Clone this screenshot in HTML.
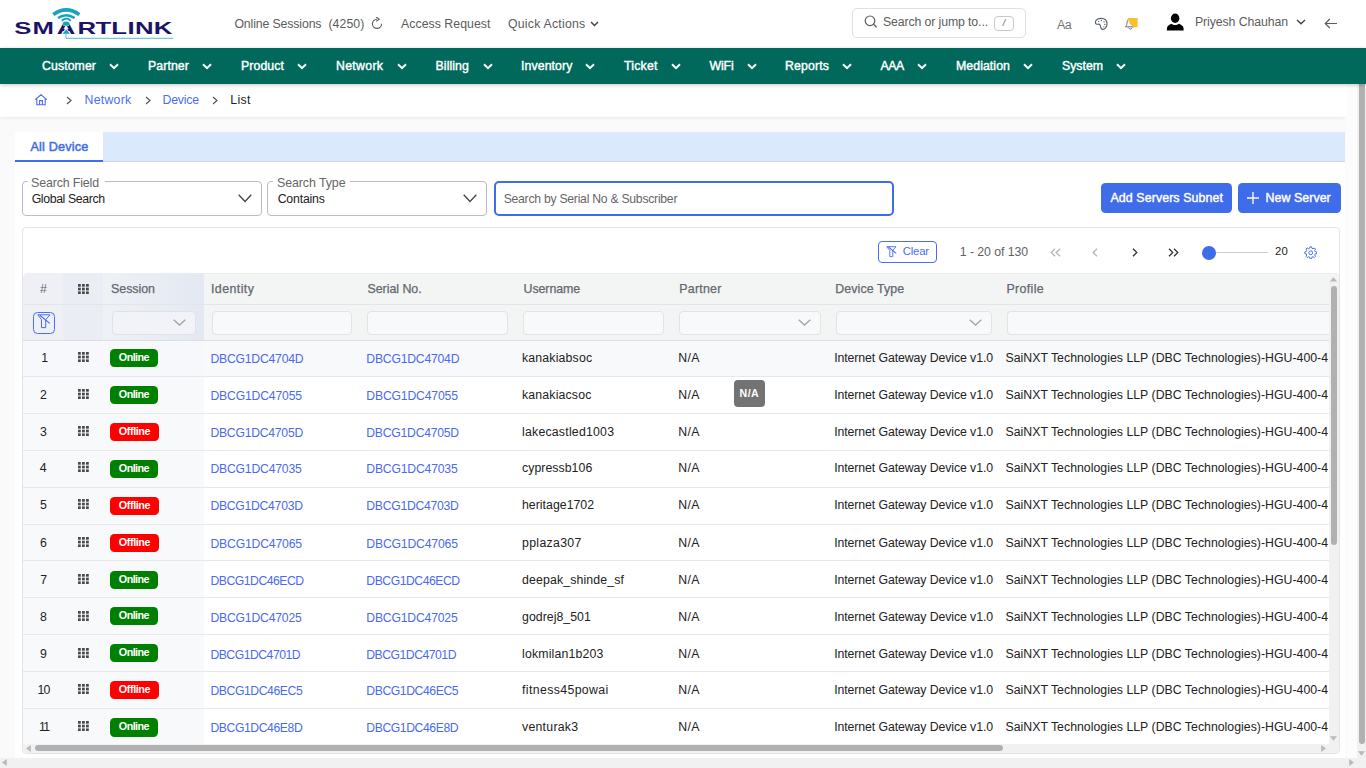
<!DOCTYPE html>
<html lang="en">
<head>
<meta charset="utf-8">
<title>Device List</title>
<style>
*{box-sizing:border-box;margin:0;padding:0}
html,body{width:1366px;height:768px;overflow:hidden;background:#fafafa;font-family:"Liberation Sans",sans-serif;font-size:13px;color:#222}
.abs,.t,svg{position:absolute}
.t{white-space:pre}
#top{position:absolute;left:0;top:0;width:1366px;height:48px;background:#fff}
#nav{position:absolute;left:0;top:48px;width:1366px;height:36px;background:#00695c;box-shadow:0 1px 4px rgba(0,0,0,.22);z-index:5}
#nav .t{-webkit-text-stroke:.4px #fff}
#crumb{position:absolute;left:0;top:84px;width:1346px;height:33px;background:#fff;box-shadow:0 0 4px rgba(0,0,0,.12)}
#tabs{position:absolute;left:15px;top:132.3px;width:1330px;height:30px;background:#dbe9fd;border-bottom:1px solid #cfd9e8}
#tab1{position:absolute;left:.3px;top:0;width:88px;height:30px;background:#fff;border-bottom:2px solid #3f6fe8}
#panel{position:absolute;left:15px;top:162px;width:1330px;height:606px;background:#fff}
.fs{position:absolute;top:181.2px;height:34.6px;border:1px solid #b9bcc8;border-radius:4px;background:#fff}
.btn{position:absolute;top:183px;height:29.7px;background:#3f6fe8;border-radius:4.5px}
.btn .t{-webkit-text-stroke:.4px #fff}
#card{position:absolute;left:22px;top:227px;width:1318px;height:527px;border:1px solid #e4e4e4;border-radius:4px;background:#fff;overflow:hidden}
</style>
</head>
<body>
<div id="top">
<svg style="left:12px;top:6px" width="164" height="36" viewBox="0 0 164 36">
<text transform="scale(1.63,1)" x="1.31 12.61 27.53 40.21 51.21 60.82 70.89 75.42 86.97" y="28" font-family="Liberation Sans, sans-serif" font-weight="700" font-size="15.8" fill="#1b1464">SMARTLINK</text>
<path d="M54.15 21.4 L58.7 28.3 L49.6 28.3 Z" fill="#fff"/>
<g fill="none" stroke="#17a2bd">
<path d="M41.3 8.6 Q54.3 -0.8 67.3 8.6" stroke-width="3.6"/>
<path d="M46 12.1 Q54.3 6.3 62.6 12.1" stroke-width="2.5"/>
<path d="M49.8 14.8 Q54.3 10.2 58.8 14.8" stroke-width="2"/>
</g>
<ellipse cx="54.1" cy="17.8" rx="3.5" ry="2.5" fill="#fff"/>
<ellipse cx="54.1" cy="17.7" rx="3.3" ry="2.1" fill="#17a2bd"/>
<path d="M54.2 23.3 L58 27.7 L50.6 27.7 Z" fill="#17a2bd"/>
<path d="M54 27.5 L54 32.3 L161 32.3" fill="none" stroke="#3fb2cc" stroke-width=".9"/>
</svg>
<div class="t" style="left:234.4px;top:16px;height:16px;line-height:16px;font-size:12.3px;color:#5c5c5c;letter-spacing:-0.124px;">Online Sessions</div>
<div class="t" style="left:328.4px;top:16px;height:16px;line-height:16px;font-size:12.3px;color:#5c5c5c;letter-spacing:0.076px;">(4250)</div>
<svg style="left:371px;top:17px" width="12" height="13" viewBox="0 0 12 13"><path d="M6 2.2 A4.6 4.6 0 1 0 10.6 6.8" fill="none" stroke="#5c5c5c" stroke-width="1.1"/><path d="M5.2 0 L8.2 2.2 L5.2 4.4" fill="none" stroke="#5c5c5c" stroke-width="1.1"/></svg>
<div class="t" style="left:401px;top:16px;height:16px;line-height:16px;font-size:12.3px;color:#5c5c5c;letter-spacing:0.046px;">Access Request</div>
<div class="t" style="left:508px;top:16px;height:16px;line-height:16px;font-size:12.3px;color:#5c5c5c;letter-spacing:0.231px;">Quick Actions</div>
<svg style="left:590px;top:21px" width="9" height="6" viewBox="0 0 9 6"><path d="M1 1 L4.5 4.5 L8 1" fill="none" stroke="#444" stroke-width="1.5"/></svg>
<div class="abs" style="left:852px;top:8px;width:174px;height:30px;border:1px solid #dde2e8;border-radius:5px"></div>
<svg style="left:864px;top:15px" width="14" height="13" viewBox="0 0 14 13"><circle cx="6" cy="5.8" r="4.8" fill="none" stroke="#5c5c5c" stroke-width="1.2"/><path d="M9.5 9.3 L12.6 12.2" stroke="#5c5c5c" stroke-width="1.3"/></svg>
<div class="t" style="left:883px;top:14px;height:16px;line-height:16px;font-size:12.3px;color:#5c5c5c;letter-spacing:-0.116px;">Search or jump to...</div>
<div class="abs" style="left:994px;top:16px;width:20px;height:15px;border:1px solid #c8c8c8;border-radius:4px;font-size:9px;line-height:13px;text-align:center;color:#555;font-style:italic">/</div>
<div class="t" style="left:1057px;top:17px;height:16px;line-height:16px;font-size:12.5px;color:#777;letter-spacing:-0.648px;">Aa</div>
<svg style="left:1094px;top:17px" width="15" height="14" viewBox="0 0 15 14"><path d="M7.2 1.3 C3.9 1.3 1.4 3.2 1.4 5.6 C1.4 7 2.6 7.4 3.9 7.2 C5.3 7 6.2 7.6 6.4 8.9 C6.7 10.8 7.3 12.5 8.6 12.4 C11 12.2 13.1 9.6 13.1 6.6 C13.1 3.4 10.6 1.3 7.2 1.3 Z" fill="none" stroke="#58616b" stroke-width="1.15"/><circle cx="4.6" cy="4.3" r=".65" fill="#58616b"/><circle cx="7.4" cy="3.5" r=".65" fill="#58616b"/><circle cx="10" cy="4.8" r=".65" fill="#58616b"/><circle cx="10.8" cy="7.4" r=".65" fill="#58616b"/><circle cx="9.8" cy="9.8" r=".65" fill="#58616b"/></svg>
<svg style="left:1124px;top:17px" width="15" height="14" viewBox="0 0 15 14"><path d="M1.6 9.8 C3 8.6 2.9 6.6 3.2 4.6 C3.5 2.8 4.6 1.6 6.2 1.4 M1.4 9.8 L10 9.8" fill="none" stroke="#6b7480" stroke-width="1"/><path d="M4.6 10.6 C5.2 12.6 7.6 12.6 8.2 10.6" fill="none" stroke="#6b7480" stroke-width="1"/><path d="M3.9 1.1 L13.7 1.1 L13.7 10.3 L10.4 10.3 Q4.6 8.2 3.9 1.1 Z" fill="#fbc02d"/></svg>
<svg style="left:1166px;top:13px" width="18" height="18" viewBox="0 0 18 18"><ellipse cx="9.15" cy="5.2" rx="4.25" ry="4.7" fill="#000"/><path d="M0.9 17.5 L0.9 15.6 C0.9 13 3.4 11.6 5.4 10.8 C7.4 12.4 10.9 12.4 12.9 10.8 C14.9 11.6 17.6 13 17.6 15.6 L17.6 17.5 Z" fill="#000"/></svg>
<div class="t" style="left:1195px;top:14px;height:16px;line-height:16px;font-size:12.3px;color:#5c5c5c;letter-spacing:-0.09px;">Priyesh Chauhan</div>
<svg style="left:1296px;top:19px" width="10" height="6" viewBox="0 0 10 6"><path d="M1 1 L5 4.8 L9 1" fill="none" stroke="#444" stroke-width="1.4"/></svg>
<svg style="left:1324px;top:18px" width="14" height="11" viewBox="0 0 14 11"><path d="M13 5.5 L1.2 5.5 M5.8 1 L1.2 5.5 L5.8 10" fill="none" stroke="#5c5c5c" stroke-width="1.2"/></svg>
</div>
<div id="nav">
<div class="t" style="left:42px;top:10px;height:16px;line-height:16px;font-size:12.3px;color:#fff;letter-spacing:0.086px;">Customer</div>
<svg style="left:109px;top:14.5px" width="10" height="7" viewBox="0 0 10 7"><path d="M1 1.2 L5 5.2 L9 1.2" fill="none" stroke="#fff" stroke-width="2"/></svg>
<div class="t" style="left:148px;top:10px;height:16px;line-height:16px;font-size:12.3px;color:#fff;letter-spacing:0.096px;">Partner</div>
<svg style="left:202px;top:14.5px" width="10" height="7" viewBox="0 0 10 7"><path d="M1 1.2 L5 5.2 L9 1.2" fill="none" stroke="#fff" stroke-width="2"/></svg>
<div class="t" style="left:241px;top:10px;height:16px;line-height:16px;font-size:12.3px;color:#fff;letter-spacing:0.087px;">Product</div>
<svg style="left:297px;top:14.5px" width="10" height="7" viewBox="0 0 10 7"><path d="M1 1.2 L5 5.2 L9 1.2" fill="none" stroke="#fff" stroke-width="2"/></svg>
<div class="t" style="left:336px;top:10px;height:16px;line-height:16px;font-size:12.3px;color:#fff;letter-spacing:0.313px;">Network</div>
<svg style="left:396.5px;top:14.5px" width="10" height="7" viewBox="0 0 10 7"><path d="M1 1.2 L5 5.2 L9 1.2" fill="none" stroke="#fff" stroke-width="2"/></svg>
<div class="t" style="left:435.5px;top:10px;height:16px;line-height:16px;font-size:12.3px;color:#fff;letter-spacing:0.098px;">Billing</div>
<svg style="left:482.5px;top:14.5px" width="10" height="7" viewBox="0 0 10 7"><path d="M1 1.2 L5 5.2 L9 1.2" fill="none" stroke="#fff" stroke-width="2"/></svg>
<div class="t" style="left:521px;top:10px;height:16px;line-height:16px;font-size:12.3px;color:#fff;letter-spacing:0.101px;">Inventory</div>
<svg style="left:585px;top:14.5px" width="10" height="7" viewBox="0 0 10 7"><path d="M1 1.2 L5 5.2 L9 1.2" fill="none" stroke="#fff" stroke-width="2"/></svg>
<div class="t" style="left:624px;top:10px;height:16px;line-height:16px;font-size:12.3px;color:#fff;letter-spacing:0.226px;">Ticket</div>
<svg style="left:671px;top:14.5px" width="10" height="7" viewBox="0 0 10 7"><path d="M1 1.2 L5 5.2 L9 1.2" fill="none" stroke="#fff" stroke-width="2"/></svg>
<div class="t" style="left:709.6px;top:10px;height:16px;line-height:16px;font-size:12.3px;color:#fff;letter-spacing:-0.173px;">WiFi</div>
<svg style="left:747px;top:14.5px" width="10" height="7" viewBox="0 0 10 7"><path d="M1 1.2 L5 5.2 L9 1.2" fill="none" stroke="#fff" stroke-width="2"/></svg>
<div class="t" style="left:785px;top:10px;height:16px;line-height:16px;font-size:12.3px;color:#fff;letter-spacing:0.134px;">Reports</div>
<svg style="left:841.5px;top:14.5px" width="10" height="7" viewBox="0 0 10 7"><path d="M1 1.2 L5 5.2 L9 1.2" fill="none" stroke="#fff" stroke-width="2"/></svg>
<div class="t" style="left:880.4px;top:10px;height:16px;line-height:16px;font-size:12.3px;color:#fff;letter-spacing:-0.336px;">AAA</div>
<svg style="left:917px;top:14.5px" width="10" height="7" viewBox="0 0 10 7"><path d="M1 1.2 L5 5.2 L9 1.2" fill="none" stroke="#fff" stroke-width="2"/></svg>
<div class="t" style="left:956px;top:10px;height:16px;line-height:16px;font-size:12.3px;color:#fff;letter-spacing:0.075px;">Mediation</div>
<svg style="left:1023px;top:14.5px" width="10" height="7" viewBox="0 0 10 7"><path d="M1 1.2 L5 5.2 L9 1.2" fill="none" stroke="#fff" stroke-width="2"/></svg>
<div class="t" style="left:1062px;top:10px;height:16px;line-height:16px;font-size:12.3px;color:#fff;letter-spacing:0.0px;">System</div>
<svg style="left:1116px;top:14.5px" width="10" height="7" viewBox="0 0 10 7"><path d="M1 1.2 L5 5.2 L9 1.2" fill="none" stroke="#fff" stroke-width="2"/></svg>
</div>
<div id="crumb">
<svg style="left:34px;top:10px" width="14" height="12" viewBox="0 0 14 12"><path d="M1 5.6 L7 0.8 L13 5.6 M2.8 4.6 L2.8 10.8 L11.2 10.8 L11.2 4.6 M5.6 10.8 L5.6 6.6 L8.4 6.6 L8.4 10.8" fill="none" stroke="#4a6cf7" stroke-width="1.1"/></svg>
<svg style="left:66.2px;top:12px" width="6" height="9" viewBox="0 0 6 9"><path d="M1 1 L5 4.5 L1 8" fill="none" stroke="#555" stroke-width="1.2"/></svg>
<div class="t" style="left:84.5px;top:8px;height:16px;line-height:16px;font-size:12.3px;color:#4a6cf7;letter-spacing:0.27px;">Network</div>
<svg style="left:144.5px;top:12px" width="6" height="9" viewBox="0 0 6 9"><path d="M1 1 L5 4.5 L1 8" fill="none" stroke="#555" stroke-width="1.2"/></svg>
<div class="t" style="left:162.5px;top:8px;height:16px;line-height:16px;font-size:12.3px;color:#4a6cf7;letter-spacing:-0.182px;">Device</div>
<svg style="left:212.3px;top:12px" width="6" height="9" viewBox="0 0 6 9"><path d="M1 1 L5 4.5 L1 8" fill="none" stroke="#555" stroke-width="1.2"/></svg>
<div class="t" style="left:230.3px;top:8px;height:16px;line-height:16px;font-size:12.3px;color:#222;letter-spacing:0.315px;">List</div>
</div>
<div id="tabs"><div id="tab1"></div>
<div class="t" style="left:15.5px;top:7px;height:16px;line-height:16px;font-size:12.6px;color:#3f6ce9;letter-spacing:0.2px;-webkit-text-stroke:.5px #3f6ce9;">All Device</div>
</div>
<div id="panel"></div>
<div class="fs" style="left:22px;width:240px"><div class="abs" style="left:5px;top:-3px;width:77px;height:5px;background:#fff"></div></div>
<div class="t" style="left:31px;top:174.5px;height:16px;line-height:16px;font-size:12.4px;color:#666;letter-spacing:-0.13px;">Search Field</div>
<div class="t" style="left:31.7px;top:191px;height:16px;line-height:16px;font-size:12.3px;color:#222;letter-spacing:-0.38px;">Global Search</div>
<svg style="left:237.5px;top:194px" width="14" height="8.5" viewBox="0 0 14 8.5"><path d="M.7 .7 L7.0 7.5 L13.3 .7" fill="none" stroke="#444" stroke-width="1.3"/></svg>
<div class="fs" style="left:267px;width:220px"><div class="abs" style="left:5px;top:-3px;width:77px;height:5px;background:#fff"></div></div>
<div class="t" style="left:277px;top:174.5px;height:16px;line-height:16px;font-size:12.4px;color:#666;letter-spacing:-0.077px;">Search Type</div>
<div class="t" style="left:277.7px;top:191px;height:16px;line-height:16px;font-size:12.3px;color:#222;letter-spacing:-0.193px;">Contains</div>
<svg style="left:463.2px;top:194px" width="14" height="8.5" viewBox="0 0 14 8.5"><path d="M.7 .7 L7.0 7.5 L13.3 .7" fill="none" stroke="#444" stroke-width="1.3"/></svg>
<div class="abs" style="left:494px;top:181px;width:400px;height:34.5px;border:2px solid #3f6ce9;border-radius:5px;background:#fff"></div>
<div class="t" style="left:503.7px;top:191px;height:16px;line-height:16px;font-size:12.2px;color:#666;letter-spacing:-0.251px;">Search by Serial No &amp; Subscriber</div>
<div class="btn" style="left:1101px;width:131px;background:#3f6ce9"><div class="t" style="left:9.5px;top:7px;height:16px;line-height:16px;font-size:12.4px;color:#fff;letter-spacing:0.089px;">Add Servers Subnet</div></div>
<div class="btn" style="left:1238px;width:102.5px;background:#3f6ce9"><svg style="left:9px;top:9px" width="12" height="12" viewBox="0 0 12 12"><path d="M6 0 L6 12 M0 6 L12 6" stroke="#fff" stroke-width="1.3"/></svg><div class="t" style="left:27.5px;top:7px;height:16px;line-height:16px;font-size:12.4px;color:#fff;letter-spacing:0.057px;">New Server</div></div>
<div id="card">
<div class="abs" style="left:855px;top:13px;width:59px;height:22px;border:1px solid #4a6cf7;border-radius:4px;background:#fff"></div>
<svg style="left:862.8px;top:18px" width="11" height="11.5" viewBox="0 0 11 11.5"><path d="M.7 .7 L10 .7 L6.8 4.4 L6.8 10.6 L3.8 10.6 L3.8 4.4 Z" fill="none" stroke="#4a6cf7" stroke-width=".9" stroke-linejoin="round"/><path d="M2.4 1 L10.2 7.4" stroke="#4a6cf7" stroke-width="1.1"/></svg>
<div class="t" style="left:879.8px;top:15.3px;height:16px;line-height:16px;font-size:11.3px;color:#4a6cf7;letter-spacing:-0.2px;">Clear</div>
<div class="t" style="left:936.8px;top:15.7px;height:16px;line-height:16px;font-size:12.3px;color:#626262;letter-spacing:-0.066px;">1 - 20 of 130</div>
<svg style="left:1027.2px;top:20px" width="11" height="9" viewBox="0 0 11 9"><path d="M5 .8 L1.2 4.5 L5 8.2 M10 .8 L6.2 4.5 L10 8.2" fill="none" stroke="#b5b5b5" stroke-width="1.3"/></svg>
<svg style="left:1069px;top:20px" width="6" height="9" viewBox="0 0 6 9"><path d="M5 .8 L1.2 4.5 L5 8.2" fill="none" stroke="#b5b5b5" stroke-width="1.3"/></svg>
<svg style="left:1108.5px;top:20px" width="6" height="9" viewBox="0 0 6 9"><path d="M1 .8 L4.8 4.5 L1 8.2" fill="none" stroke="#333" stroke-width="1.3"/></svg>
<svg style="left:1145px;top:20px" width="11" height="9" viewBox="0 0 11 9"><path d="M1 .8 L4.8 4.5 L1 8.2 M6 .8 L9.8 4.5 L6 8.2" fill="none" stroke="#333" stroke-width="1.3"/></svg>
<div class="abs" style="left:1189px;top:23.7px;width:56.4px;height:1.6px;background:#cbcbcb"></div>
<div class="abs" style="left:1179.2px;top:17.5px;width:14px;height:14px;border-radius:50%;background:#3f6ce9"></div>
<div class="t" style="left:1252px;top:15px;height:16px;line-height:16px;font-size:11.3px;color:#222;letter-spacing:0.111px;">20</div>
<svg style="left:1280.9px;top:17.6px" width="13.5" height="13.5" viewBox="0 0 13.5 13.5"><circle cx="6.75" cy="6.75" r="1.9" fill="none" stroke="#4a6cf7" stroke-width="1"/><path d="M5.95 0.80 L7.55 0.80 L7.93 2.30 L9.06 2.77 L10.39 1.98 L11.52 3.11 L10.73 4.44 L11.20 5.57 L12.70 5.95 L12.70 7.55 L11.20 7.93 L10.73 9.06 L11.52 10.39 L10.39 11.52 L9.06 10.73 L7.93 11.20 L7.55 12.70 L5.95 12.70 L5.57 11.20 L4.44 10.73 L3.11 11.52 L1.98 10.39 L2.77 9.06 L2.30 7.93 L0.80 7.55 L0.80 5.95 L2.30 5.57 L2.77 4.44 L1.98 3.11 L3.11 1.98 L4.44 2.77 L5.57 2.30 Z" fill="none" stroke="#4a6cf7" stroke-width="1" stroke-linejoin="round"/></svg>
<div class="abs" style="left:0;top:45px;width:1317px;height:67.19999999999999px;background:#f3f4f4;border-top:1px solid #ebebeb;border-radius:5px 5px 0 0"></div>
<div class="abs" style="left:0;top:45px;width:40.4px;height:67.19999999999999px;background:#eef0f5;border-radius:5px 0 0 0"></div>
<div class="abs" style="left:40.4px;top:45px;width:40px;height:67.19999999999999px;background:#eaedf3"></div>
<div class="abs" style="left:80.4px;top:45px;width:100.6px;height:67.19999999999999px;background:linear-gradient(90deg,#eef1f6,#e4e8f1)"></div>
<div class="abs" style="left:0;top:76px;width:1306px;height:1px;background:#e3e5e8"></div>
<div class="abs" style="left:0;top:112.2px;width:1306px;height:1px;background:#dcdfe4"></div>
<div class="t" style="left:17px;top:53px;height:16px;line-height:16px;font-size:12.3px;color:#636870;letter-spacing:0.656px;">#</div>
<svg style="left:55.3px;top:55.6px" width="11" height="10.4" viewBox="0 0 11 10.4"><rect x="0" y="0.0" width="2.8" height="2.7" fill="#4a4a4a"/><rect x="0" y="3.7" width="2.8" height="2.7" fill="#4a4a4a"/><rect x="0" y="7.4" width="2.8" height="2.7" fill="#4a4a4a"/><rect x="4" y="0.0" width="2.8" height="2.7" fill="#4a4a4a"/><rect x="4" y="3.7" width="2.8" height="2.7" fill="#4a4a4a"/><rect x="4" y="7.4" width="2.8" height="2.7" fill="#4a4a4a"/><rect x="8" y="0.0" width="2.8" height="2.7" fill="#4a4a4a"/><rect x="8" y="3.7" width="2.8" height="2.7" fill="#4a4a4a"/><rect x="8" y="7.4" width="2.8" height="2.7" fill="#4a4a4a"/></svg>
<div class="t" style="left:88px;top:53px;height:16px;line-height:16px;font-size:12.4px;color:#636870;letter-spacing:-0.013px;-webkit-text-stroke:.25px #636870;">Session</div>
<div class="t" style="left:188px;top:53px;height:16px;line-height:16px;font-size:12.4px;color:#636870;letter-spacing:0.418px;-webkit-text-stroke:.25px #636870;">Identity</div>
<div class="t" style="left:344.4px;top:53px;height:16px;line-height:16px;font-size:12.4px;color:#636870;letter-spacing:-0.011px;-webkit-text-stroke:.25px #636870;">Serial No.</div>
<div class="t" style="left:500.5px;top:53px;height:16px;line-height:16px;font-size:12.4px;color:#636870;letter-spacing:-0.057px;-webkit-text-stroke:.25px #636870;">Username</div>
<div class="t" style="left:656.3px;top:53px;height:16px;line-height:16px;font-size:12.4px;color:#636870;letter-spacing:0.223px;-webkit-text-stroke:.25px #636870;">Partner</div>
<div class="t" style="left:812.3px;top:53px;height:16px;line-height:16px;font-size:12.4px;color:#636870;letter-spacing:0.094px;-webkit-text-stroke:.25px #636870;">Device Type</div>
<div class="t" style="left:983.5px;top:53px;height:16px;line-height:16px;font-size:12.4px;color:#636870;letter-spacing:0.339px;-webkit-text-stroke:.25px #636870;">Profile</div>
<div class="abs" style="left:10px;top:83.8px;width:22px;height:22px;border:1px solid #4a6cf7;border-radius:4.5px;background:#eef1f8"></div>
<svg style="left:14.3px;top:86.3px" width="14" height="15" viewBox="0 0 14 15"><path d="M.8 .8 L12.9 .8 L8.7 5.7 L8.7 13.6 L4.5 13.6 L4.5 5.7 Z" fill="none" stroke="#4a6cf7" stroke-width="1" stroke-linejoin="round"/><path d="M2.8 1.2 L12.8 9.4" stroke="#4a6cf7" stroke-width="1.2"/></svg>
<div class="abs" style="left:88.5px;top:83.3px;width:84.9px;height:23.6px;border:1px solid #dfe2ea;border-radius:4px;background:#f1f3f8"></div><svg style="left:150.4px;top:91.3px" width="13" height="7" viewBox="0 0 13 7"><path d="M.7 .7 L6.5 6 L12.3 .7" fill="none" stroke="#a3a3a3" stroke-width="1.3"/></svg>
<div class="abs" style="left:188.6px;top:83.3px;width:140.9px;height:23.6px;border:1px solid #e1e3e8;border-radius:4px;background:#f8f9fa"></div>
<div class="abs" style="left:344px;top:83.3px;width:141px;height:23.6px;border:1px solid #e1e3e8;border-radius:4px;background:#f8f9fa"></div>
<div class="abs" style="left:500px;top:83.3px;width:141px;height:23.6px;border:1px solid #e1e3e8;border-radius:4px;background:#f8f9fa"></div>
<div class="abs" style="left:656px;top:83.3px;width:141.5px;height:23.6px;border:1px solid #e1e3e8;border-radius:4px;background:#f8f9fa"></div><svg style="left:774.5px;top:91.3px" width="13" height="7" viewBox="0 0 13 7"><path d="M.7 .7 L6.5 6 L12.3 .7" fill="none" stroke="#a3a3a3" stroke-width="1.3"/></svg>
<div class="abs" style="left:812.5px;top:83.3px;width:156.0px;height:23.6px;border:1px solid #e1e3e8;border-radius:4px;background:#f8f9fa"></div><svg style="left:945.5px;top:91.3px" width="13" height="7" viewBox="0 0 13 7"><path d="M.7 .7 L6.5 6 L12.3 .7" fill="none" stroke="#a3a3a3" stroke-width="1.3"/></svg>
<div class="abs" style="left:983.5px;top:83.3px;width:338.5px;height:23.6px;border:1px solid #e1e3e8;border-radius:4px;background:#f8f9fa;border-right:0;border-radius:4px 0 0 4px"></div>
<div class="abs" style="left:0;top:112.75px;width:1306px;height:35.75px;background:#f8f9fa"></div>
<div class="abs" style="left:0;top:112.75px;width:181px;height:35.75px;background:#f7f8fb"></div>
<div class="t" style="left:18.35px;top:122px;height:16px;line-height:16px;font-size:12.3px;color:#222;letter-spacing:-2.344px;">1</div>
<svg style="left:55.3px;top:123.7px" width="11" height="10.4" viewBox="0 0 11 10.4"><rect x="0" y="0.0" width="2.8" height="2.7" fill="#4a4a4a"/><rect x="0" y="3.7" width="2.8" height="2.7" fill="#4a4a4a"/><rect x="0" y="7.4" width="2.8" height="2.7" fill="#4a4a4a"/><rect x="4" y="0.0" width="2.8" height="2.7" fill="#4a4a4a"/><rect x="4" y="3.7" width="2.8" height="2.7" fill="#4a4a4a"/><rect x="4" y="7.4" width="2.8" height="2.7" fill="#4a4a4a"/><rect x="8" y="0.0" width="2.8" height="2.7" fill="#4a4a4a"/><rect x="8" y="3.7" width="2.8" height="2.7" fill="#4a4a4a"/><rect x="8" y="7.4" width="2.8" height="2.7" fill="#4a4a4a"/></svg>
<div class="abs" style="left:87px;top:121.1px;width:48px;height:18.2px;border-radius:4.5px;background:#008000"></div>
<div class="t" style="left:95.8px;top:121px;height:16px;line-height:16px;font-size:10.8px;color:#fff;font-weight:700;letter-spacing:-0.566px;">Online</div>
<div class="t" style="left:187.4px;top:123px;height:16px;line-height:16px;font-size:12.2px;color:#4a6af0;letter-spacing:-0.21px;">DBCG1DC4704D</div>
<div class="t" style="left:343.3px;top:123px;height:16px;line-height:16px;font-size:12.2px;color:#4a6af0;letter-spacing:-0.21px;">DBCG1DC4704D</div>
<div class="t" style="left:499px;top:122px;height:16px;line-height:16px;font-size:12.3px;color:#222;letter-spacing:0.175px;">kanakiabsoc</div>
<div class="t" style="left:655.2px;top:122px;height:16px;line-height:16px;font-size:12.3px;color:#222;letter-spacing:0.367px;">N/A</div>
<div class="t" style="left:811.2px;top:122px;height:16px;line-height:16px;font-size:12.3px;color:#222;letter-spacing:-0.09px;">Internet Gateway Device v1.0</div>
<div class="t" style="left:982.5px;top:122px;height:16px;line-height:16px;font-size:12.3px;color:#222;letter-spacing:0.017px;">SaiNXT Technologies LLP (DBC Technologies)-HGU-400-4</div>
<div class="abs" style="left:0;top:148.5px;width:181px;height:36.8px;background:#f8f9fb"></div>
<div class="t" style="left:17.1px;top:159px;height:16px;line-height:16px;font-size:12.3px;color:#222;letter-spacing:0.156px;">2</div>
<svg style="left:55.3px;top:160.7px" width="11" height="10.4" viewBox="0 0 11 10.4"><rect x="0" y="0.0" width="2.8" height="2.7" fill="#4a4a4a"/><rect x="0" y="3.7" width="2.8" height="2.7" fill="#4a4a4a"/><rect x="0" y="7.4" width="2.8" height="2.7" fill="#4a4a4a"/><rect x="4" y="0.0" width="2.8" height="2.7" fill="#4a4a4a"/><rect x="4" y="3.7" width="2.8" height="2.7" fill="#4a4a4a"/><rect x="4" y="7.4" width="2.8" height="2.7" fill="#4a4a4a"/><rect x="8" y="0.0" width="2.8" height="2.7" fill="#4a4a4a"/><rect x="8" y="3.7" width="2.8" height="2.7" fill="#4a4a4a"/><rect x="8" y="7.4" width="2.8" height="2.7" fill="#4a4a4a"/></svg>
<div class="abs" style="left:87px;top:158.1px;width:48px;height:18.2px;border-radius:4.5px;background:#008000"></div>
<div class="t" style="left:95.8px;top:158px;height:16px;line-height:16px;font-size:10.8px;color:#fff;font-weight:700;letter-spacing:-0.566px;">Online</div>
<div class="t" style="left:187.4px;top:160px;height:16px;line-height:16px;font-size:12.2px;color:#4a6af0;letter-spacing:-0.165px;">DBCG1DC47055</div>
<div class="t" style="left:343.3px;top:160px;height:16px;line-height:16px;font-size:12.2px;color:#4a6af0;letter-spacing:-0.165px;">DBCG1DC47055</div>
<div class="t" style="left:499px;top:159px;height:16px;line-height:16px;font-size:12.3px;color:#222;letter-spacing:0.166px;">kanakiacsoc</div>
<div class="t" style="left:655.2px;top:159px;height:16px;line-height:16px;font-size:12.3px;color:#222;letter-spacing:0.367px;">N/A</div>
<div class="t" style="left:811.2px;top:159px;height:16px;line-height:16px;font-size:12.3px;color:#222;letter-spacing:-0.09px;">Internet Gateway Device v1.0</div>
<div class="t" style="left:982.5px;top:159px;height:16px;line-height:16px;font-size:12.3px;color:#222;letter-spacing:0.017px;">SaiNXT Technologies LLP (DBC Technologies)-HGU-400-4</div>
<div class="abs" style="left:0;top:185.3px;width:181px;height:36.7px;background:#f8f9fb"></div>
<div class="t" style="left:17.1px;top:196px;height:16px;line-height:16px;font-size:12.3px;color:#222;letter-spacing:0.156px;">3</div>
<svg style="left:55.3px;top:197.7px" width="11" height="10.4" viewBox="0 0 11 10.4"><rect x="0" y="0.0" width="2.8" height="2.7" fill="#4a4a4a"/><rect x="0" y="3.7" width="2.8" height="2.7" fill="#4a4a4a"/><rect x="0" y="7.4" width="2.8" height="2.7" fill="#4a4a4a"/><rect x="4" y="0.0" width="2.8" height="2.7" fill="#4a4a4a"/><rect x="4" y="3.7" width="2.8" height="2.7" fill="#4a4a4a"/><rect x="4" y="7.4" width="2.8" height="2.7" fill="#4a4a4a"/><rect x="8" y="0.0" width="2.8" height="2.7" fill="#4a4a4a"/><rect x="8" y="3.7" width="2.8" height="2.7" fill="#4a4a4a"/><rect x="8" y="7.4" width="2.8" height="2.7" fill="#4a4a4a"/></svg>
<div class="abs" style="left:87px;top:195.3px;width:49px;height:18.2px;border-radius:4.5px;background:#fe0000"></div>
<div class="t" style="left:95.8px;top:195px;height:16px;line-height:16px;font-size:10.8px;color:#fff;font-weight:700;letter-spacing:-0.415px;">Offline</div>
<div class="t" style="left:187.4px;top:197px;height:16px;line-height:16px;font-size:12.2px;color:#4a6af0;letter-spacing:-0.243px;">DBCG1DC4705D</div>
<div class="t" style="left:343.3px;top:197px;height:16px;line-height:16px;font-size:12.2px;color:#4a6af0;letter-spacing:-0.243px;">DBCG1DC4705D</div>
<div class="t" style="left:499px;top:196px;height:16px;line-height:16px;font-size:12.3px;color:#222;letter-spacing:0.221px;">lakecastled1003</div>
<div class="t" style="left:655.2px;top:196px;height:16px;line-height:16px;font-size:12.3px;color:#222;letter-spacing:0.367px;">N/A</div>
<div class="t" style="left:811.2px;top:196px;height:16px;line-height:16px;font-size:12.3px;color:#222;letter-spacing:-0.09px;">Internet Gateway Device v1.0</div>
<div class="t" style="left:982.5px;top:196px;height:16px;line-height:16px;font-size:12.3px;color:#222;letter-spacing:0.017px;">SaiNXT Technologies LLP (DBC Technologies)-HGU-400-4</div>
<div class="abs" style="left:0;top:222px;width:181px;height:37px;background:#f8f9fb"></div>
<div class="t" style="left:16.85px;top:232px;height:16px;line-height:16px;font-size:12.3px;color:#222;letter-spacing:0.656px;">4</div>
<svg style="left:55.3px;top:233.7px" width="11" height="10.4" viewBox="0 0 11 10.4"><rect x="0" y="0.0" width="2.8" height="2.7" fill="#4a4a4a"/><rect x="0" y="3.7" width="2.8" height="2.7" fill="#4a4a4a"/><rect x="0" y="7.4" width="2.8" height="2.7" fill="#4a4a4a"/><rect x="4" y="0.0" width="2.8" height="2.7" fill="#4a4a4a"/><rect x="4" y="3.7" width="2.8" height="2.7" fill="#4a4a4a"/><rect x="4" y="7.4" width="2.8" height="2.7" fill="#4a4a4a"/><rect x="8" y="0.0" width="2.8" height="2.7" fill="#4a4a4a"/><rect x="8" y="3.7" width="2.8" height="2.7" fill="#4a4a4a"/><rect x="8" y="7.4" width="2.8" height="2.7" fill="#4a4a4a"/></svg>
<div class="abs" style="left:87px;top:231.8px;width:48px;height:18.2px;border-radius:4.5px;background:#008000"></div>
<div class="t" style="left:95.8px;top:232px;height:16px;line-height:16px;font-size:10.8px;color:#fff;font-weight:700;letter-spacing:-0.566px;">Online</div>
<div class="t" style="left:187.4px;top:233px;height:16px;line-height:16px;font-size:12.2px;color:#4a6af0;letter-spacing:-0.19px;">DBCG1DC47035</div>
<div class="t" style="left:343.3px;top:233px;height:16px;line-height:16px;font-size:12.2px;color:#4a6af0;letter-spacing:-0.19px;">DBCG1DC47035</div>
<div class="t" style="left:499px;top:232px;height:16px;line-height:16px;font-size:12.3px;color:#222;letter-spacing:0.051px;">cypressb106</div>
<div class="t" style="left:655.2px;top:232px;height:16px;line-height:16px;font-size:12.3px;color:#222;letter-spacing:0.367px;">N/A</div>
<div class="t" style="left:811.2px;top:232px;height:16px;line-height:16px;font-size:12.3px;color:#222;letter-spacing:-0.09px;">Internet Gateway Device v1.0</div>
<div class="t" style="left:982.5px;top:232px;height:16px;line-height:16px;font-size:12.3px;color:#222;letter-spacing:0.017px;">SaiNXT Technologies LLP (DBC Technologies)-HGU-400-4</div>
<div class="abs" style="left:0;top:259px;width:181px;height:37px;background:#f8f9fb"></div>
<div class="t" style="left:17.1px;top:269px;height:16px;line-height:16px;font-size:12.3px;color:#222;letter-spacing:0.156px;">5</div>
<svg style="left:55.3px;top:270.7px" width="11" height="10.4" viewBox="0 0 11 10.4"><rect x="0" y="0.0" width="2.8" height="2.7" fill="#4a4a4a"/><rect x="0" y="3.7" width="2.8" height="2.7" fill="#4a4a4a"/><rect x="0" y="7.4" width="2.8" height="2.7" fill="#4a4a4a"/><rect x="4" y="0.0" width="2.8" height="2.7" fill="#4a4a4a"/><rect x="4" y="3.7" width="2.8" height="2.7" fill="#4a4a4a"/><rect x="4" y="7.4" width="2.8" height="2.7" fill="#4a4a4a"/><rect x="8" y="0.0" width="2.8" height="2.7" fill="#4a4a4a"/><rect x="8" y="3.7" width="2.8" height="2.7" fill="#4a4a4a"/><rect x="8" y="7.4" width="2.8" height="2.7" fill="#4a4a4a"/></svg>
<div class="abs" style="left:87px;top:268.8px;width:49px;height:18.2px;border-radius:4.5px;background:#fe0000"></div>
<div class="t" style="left:95.8px;top:269px;height:16px;line-height:16px;font-size:10.8px;color:#fff;font-weight:700;letter-spacing:-0.415px;">Offline</div>
<div class="t" style="left:187.4px;top:270px;height:16px;line-height:16px;font-size:12.2px;color:#4a6af0;letter-spacing:-0.268px;">DBCG1DC4703D</div>
<div class="t" style="left:343.3px;top:270px;height:16px;line-height:16px;font-size:12.2px;color:#4a6af0;letter-spacing:-0.268px;">DBCG1DC4703D</div>
<div class="t" style="left:499px;top:269px;height:16px;line-height:16px;font-size:12.3px;color:#222;letter-spacing:0.025px;">heritage1702</div>
<div class="t" style="left:655.2px;top:269px;height:16px;line-height:16px;font-size:12.3px;color:#222;letter-spacing:0.367px;">N/A</div>
<div class="t" style="left:811.2px;top:269px;height:16px;line-height:16px;font-size:12.3px;color:#222;letter-spacing:-0.09px;">Internet Gateway Device v1.0</div>
<div class="t" style="left:982.5px;top:269px;height:16px;line-height:16px;font-size:12.3px;color:#222;letter-spacing:0.017px;">SaiNXT Technologies LLP (DBC Technologies)-HGU-400-4</div>
<div class="abs" style="left:0;top:296px;width:181px;height:36.85px;background:#f8f9fb"></div>
<div class="t" style="left:17.1px;top:307px;height:16px;line-height:16px;font-size:12.3px;color:#222;letter-spacing:0.156px;">6</div>
<svg style="left:55.3px;top:308.7px" width="11" height="10.4" viewBox="0 0 11 10.4"><rect x="0" y="0.0" width="2.8" height="2.7" fill="#4a4a4a"/><rect x="0" y="3.7" width="2.8" height="2.7" fill="#4a4a4a"/><rect x="0" y="7.4" width="2.8" height="2.7" fill="#4a4a4a"/><rect x="4" y="0.0" width="2.8" height="2.7" fill="#4a4a4a"/><rect x="4" y="3.7" width="2.8" height="2.7" fill="#4a4a4a"/><rect x="4" y="7.4" width="2.8" height="2.7" fill="#4a4a4a"/><rect x="8" y="0.0" width="2.8" height="2.7" fill="#4a4a4a"/><rect x="8" y="3.7" width="2.8" height="2.7" fill="#4a4a4a"/><rect x="8" y="7.4" width="2.8" height="2.7" fill="#4a4a4a"/></svg>
<div class="abs" style="left:87px;top:306px;width:49px;height:18.2px;border-radius:4.5px;background:#fe0000"></div>
<div class="t" style="left:95.8px;top:306px;height:16px;line-height:16px;font-size:10.8px;color:#fff;font-weight:700;letter-spacing:-0.415px;">Offline</div>
<div class="t" style="left:187.4px;top:308px;height:16px;line-height:16px;font-size:12.2px;color:#4a6af0;letter-spacing:-0.165px;">DBCG1DC47065</div>
<div class="t" style="left:343.3px;top:308px;height:16px;line-height:16px;font-size:12.2px;color:#4a6af0;letter-spacing:-0.165px;">DBCG1DC47065</div>
<div class="t" style="left:499px;top:307px;height:16px;line-height:16px;font-size:12.3px;color:#222;letter-spacing:0.326px;">pplaza307</div>
<div class="t" style="left:655.2px;top:307px;height:16px;line-height:16px;font-size:12.3px;color:#222;letter-spacing:0.367px;">N/A</div>
<div class="t" style="left:811.2px;top:307px;height:16px;line-height:16px;font-size:12.3px;color:#222;letter-spacing:-0.09px;">Internet Gateway Device v1.0</div>
<div class="t" style="left:982.5px;top:307px;height:16px;line-height:16px;font-size:12.3px;color:#222;letter-spacing:0.017px;">SaiNXT Technologies LLP (DBC Technologies)-HGU-400-4</div>
<div class="abs" style="left:0;top:332.85px;width:181px;height:36.55px;background:#f8f9fb"></div>
<div class="t" style="left:17.35px;top:344px;height:16px;line-height:16px;font-size:12.3px;color:#222;letter-spacing:-0.344px;">7</div>
<svg style="left:55.3px;top:345.7px" width="11" height="10.4" viewBox="0 0 11 10.4"><rect x="0" y="0.0" width="2.8" height="2.7" fill="#4a4a4a"/><rect x="0" y="3.7" width="2.8" height="2.7" fill="#4a4a4a"/><rect x="0" y="7.4" width="2.8" height="2.7" fill="#4a4a4a"/><rect x="4" y="0.0" width="2.8" height="2.7" fill="#4a4a4a"/><rect x="4" y="3.7" width="2.8" height="2.7" fill="#4a4a4a"/><rect x="4" y="7.4" width="2.8" height="2.7" fill="#4a4a4a"/><rect x="8" y="0.0" width="2.8" height="2.7" fill="#4a4a4a"/><rect x="8" y="3.7" width="2.8" height="2.7" fill="#4a4a4a"/><rect x="8" y="7.4" width="2.8" height="2.7" fill="#4a4a4a"/></svg>
<div class="abs" style="left:87px;top:342.7px;width:48px;height:18.2px;border-radius:4.5px;background:#008000"></div>
<div class="t" style="left:95.8px;top:343px;height:16px;line-height:16px;font-size:10.8px;color:#fff;font-weight:700;letter-spacing:-0.566px;">Online</div>
<div class="t" style="left:187.4px;top:345px;height:16px;line-height:16px;font-size:12.2px;color:#4a6af0;letter-spacing:-0.466px;">DBCG1DC46ECD</div>
<div class="t" style="left:343.3px;top:345px;height:16px;line-height:16px;font-size:12.2px;color:#4a6af0;letter-spacing:-0.466px;">DBCG1DC46ECD</div>
<div class="t" style="left:499px;top:344px;height:16px;line-height:16px;font-size:12.3px;color:#222;letter-spacing:0.142px;">deepak_shinde_sf</div>
<div class="t" style="left:655.2px;top:344px;height:16px;line-height:16px;font-size:12.3px;color:#222;letter-spacing:0.367px;">N/A</div>
<div class="t" style="left:811.2px;top:344px;height:16px;line-height:16px;font-size:12.3px;color:#222;letter-spacing:-0.09px;">Internet Gateway Device v1.0</div>
<div class="t" style="left:982.5px;top:344px;height:16px;line-height:16px;font-size:12.3px;color:#222;letter-spacing:0.017px;">SaiNXT Technologies LLP (DBC Technologies)-HGU-400-4</div>
<div class="abs" style="left:0;top:369.4px;width:181px;height:36.95px;background:#f8f9fb"></div>
<div class="t" style="left:17.1px;top:381px;height:16px;line-height:16px;font-size:12.3px;color:#222;letter-spacing:0.156px;">8</div>
<svg style="left:55.3px;top:382.7px" width="11" height="10.4" viewBox="0 0 11 10.4"><rect x="0" y="0.0" width="2.8" height="2.7" fill="#4a4a4a"/><rect x="0" y="3.7" width="2.8" height="2.7" fill="#4a4a4a"/><rect x="0" y="7.4" width="2.8" height="2.7" fill="#4a4a4a"/><rect x="4" y="0.0" width="2.8" height="2.7" fill="#4a4a4a"/><rect x="4" y="3.7" width="2.8" height="2.7" fill="#4a4a4a"/><rect x="4" y="7.4" width="2.8" height="2.7" fill="#4a4a4a"/><rect x="8" y="0.0" width="2.8" height="2.7" fill="#4a4a4a"/><rect x="8" y="3.7" width="2.8" height="2.7" fill="#4a4a4a"/><rect x="8" y="7.4" width="2.8" height="2.7" fill="#4a4a4a"/></svg>
<div class="abs" style="left:87px;top:379.3px;width:48px;height:18.2px;border-radius:4.5px;background:#008000"></div>
<div class="t" style="left:95.8px;top:379px;height:16px;line-height:16px;font-size:10.8px;color:#fff;font-weight:700;letter-spacing:-0.566px;">Online</div>
<div class="t" style="left:187.4px;top:382px;height:16px;line-height:16px;font-size:12.2px;color:#4a6af0;letter-spacing:-0.19px;">DBCG1DC47025</div>
<div class="t" style="left:343.3px;top:382px;height:16px;line-height:16px;font-size:12.2px;color:#4a6af0;letter-spacing:-0.19px;">DBCG1DC47025</div>
<div class="t" style="left:499px;top:381px;height:16px;line-height:16px;font-size:12.3px;color:#222;letter-spacing:0.037px;">godrej8_501</div>
<div class="t" style="left:655.2px;top:381px;height:16px;line-height:16px;font-size:12.3px;color:#222;letter-spacing:0.367px;">N/A</div>
<div class="t" style="left:811.2px;top:381px;height:16px;line-height:16px;font-size:12.3px;color:#222;letter-spacing:-0.09px;">Internet Gateway Device v1.0</div>
<div class="t" style="left:982.5px;top:381px;height:16px;line-height:16px;font-size:12.3px;color:#222;letter-spacing:0.017px;">SaiNXT Technologies LLP (DBC Technologies)-HGU-400-4</div>
<div class="abs" style="left:0;top:406.35px;width:181px;height:37.05px;background:#f8f9fb"></div>
<div class="t" style="left:17.1px;top:418px;height:16px;line-height:16px;font-size:12.3px;color:#222;letter-spacing:0.156px;">9</div>
<svg style="left:55.3px;top:419.7px" width="11" height="10.4" viewBox="0 0 11 10.4"><rect x="0" y="0.0" width="2.8" height="2.7" fill="#4a4a4a"/><rect x="0" y="3.7" width="2.8" height="2.7" fill="#4a4a4a"/><rect x="0" y="7.4" width="2.8" height="2.7" fill="#4a4a4a"/><rect x="4" y="0.0" width="2.8" height="2.7" fill="#4a4a4a"/><rect x="4" y="3.7" width="2.8" height="2.7" fill="#4a4a4a"/><rect x="4" y="7.4" width="2.8" height="2.7" fill="#4a4a4a"/><rect x="8" y="0.0" width="2.8" height="2.7" fill="#4a4a4a"/><rect x="8" y="3.7" width="2.8" height="2.7" fill="#4a4a4a"/><rect x="8" y="7.4" width="2.8" height="2.7" fill="#4a4a4a"/></svg>
<div class="abs" style="left:87px;top:416.2px;width:48px;height:18.2px;border-radius:4.5px;background:#008000"></div>
<div class="t" style="left:95.8px;top:416px;height:16px;line-height:16px;font-size:10.8px;color:#fff;font-weight:700;letter-spacing:-0.566px;">Online</div>
<div class="t" style="left:187.4px;top:419px;height:16px;line-height:16px;font-size:12.2px;color:#4a6af0;letter-spacing:-0.485px;">DBCG1DC4701D</div>
<div class="t" style="left:343.3px;top:419px;height:16px;line-height:16px;font-size:12.2px;color:#4a6af0;letter-spacing:-0.485px;">DBCG1DC4701D</div>
<div class="t" style="left:499px;top:418px;height:16px;line-height:16px;font-size:12.3px;color:#222;letter-spacing:0.176px;">lokmilan1b203</div>
<div class="t" style="left:655.2px;top:418px;height:16px;line-height:16px;font-size:12.3px;color:#222;letter-spacing:0.367px;">N/A</div>
<div class="t" style="left:811.2px;top:418px;height:16px;line-height:16px;font-size:12.3px;color:#222;letter-spacing:-0.09px;">Internet Gateway Device v1.0</div>
<div class="t" style="left:982.5px;top:418px;height:16px;line-height:16px;font-size:12.3px;color:#222;letter-spacing:0.017px;">SaiNXT Technologies LLP (DBC Technologies)-HGU-400-4</div>
<div class="abs" style="left:0;top:443.4px;width:181px;height:36.9px;background:#f8f9fb"></div>
<div class="t" style="left:14.6px;top:454px;height:16px;line-height:16px;font-size:12.3px;color:#222;letter-spacing:-0.844px;">10</div>
<svg style="left:55.3px;top:455.7px" width="11" height="10.4" viewBox="0 0 11 10.4"><rect x="0" y="0.0" width="2.8" height="2.7" fill="#4a4a4a"/><rect x="0" y="3.7" width="2.8" height="2.7" fill="#4a4a4a"/><rect x="0" y="7.4" width="2.8" height="2.7" fill="#4a4a4a"/><rect x="4" y="0.0" width="2.8" height="2.7" fill="#4a4a4a"/><rect x="4" y="3.7" width="2.8" height="2.7" fill="#4a4a4a"/><rect x="4" y="7.4" width="2.8" height="2.7" fill="#4a4a4a"/><rect x="8" y="0.0" width="2.8" height="2.7" fill="#4a4a4a"/><rect x="8" y="3.7" width="2.8" height="2.7" fill="#4a4a4a"/><rect x="8" y="7.4" width="2.8" height="2.7" fill="#4a4a4a"/></svg>
<div class="abs" style="left:87px;top:453.1px;width:49px;height:18.2px;border-radius:4.5px;background:#fe0000"></div>
<div class="t" style="left:95.8px;top:453px;height:16px;line-height:16px;font-size:10.8px;color:#fff;font-weight:700;letter-spacing:-0.415px;">Offline</div>
<div class="t" style="left:187.4px;top:455px;height:16px;line-height:16px;font-size:12.2px;color:#4a6af0;letter-spacing:-0.413px;">DBCG1DC46EC5</div>
<div class="t" style="left:343.3px;top:455px;height:16px;line-height:16px;font-size:12.2px;color:#4a6af0;letter-spacing:-0.413px;">DBCG1DC46EC5</div>
<div class="t" style="left:499px;top:454px;height:16px;line-height:16px;font-size:12.3px;color:#222;letter-spacing:0.381px;">fitness45powai</div>
<div class="t" style="left:655.2px;top:454px;height:16px;line-height:16px;font-size:12.3px;color:#222;letter-spacing:0.367px;">N/A</div>
<div class="t" style="left:811.2px;top:454px;height:16px;line-height:16px;font-size:12.3px;color:#222;letter-spacing:-0.09px;">Internet Gateway Device v1.0</div>
<div class="t" style="left:982.5px;top:454px;height:16px;line-height:16px;font-size:12.3px;color:#222;letter-spacing:0.017px;">SaiNXT Technologies LLP (DBC Technologies)-HGU-400-4</div>
<div class="abs" style="left:0;top:480.3px;width:181px;height:36.6px;background:#f8f9fb"></div>
<div class="t" style="left:16.1px;top:491px;height:16px;line-height:16px;font-size:12.3px;color:#222;letter-spacing:-1.883px;">11</div>
<svg style="left:55.3px;top:492.7px" width="11" height="10.4" viewBox="0 0 11 10.4"><rect x="0" y="0.0" width="2.8" height="2.7" fill="#4a4a4a"/><rect x="0" y="3.7" width="2.8" height="2.7" fill="#4a4a4a"/><rect x="0" y="7.4" width="2.8" height="2.7" fill="#4a4a4a"/><rect x="4" y="0.0" width="2.8" height="2.7" fill="#4a4a4a"/><rect x="4" y="3.7" width="2.8" height="2.7" fill="#4a4a4a"/><rect x="4" y="7.4" width="2.8" height="2.7" fill="#4a4a4a"/><rect x="8" y="0.0" width="2.8" height="2.7" fill="#4a4a4a"/><rect x="8" y="3.7" width="2.8" height="2.7" fill="#4a4a4a"/><rect x="8" y="7.4" width="2.8" height="2.7" fill="#4a4a4a"/></svg>
<div class="abs" style="left:87px;top:490.4px;width:48px;height:18.2px;border-radius:4.5px;background:#008000"></div>
<div class="t" style="left:95.8px;top:490px;height:16px;line-height:16px;font-size:10.8px;color:#fff;font-weight:700;letter-spacing:-0.566px;">Online</div>
<div class="t" style="left:187.4px;top:492px;height:16px;line-height:16px;font-size:12.2px;color:#4a6af0;letter-spacing:-0.413px;">DBCG1DC46E8D</div>
<div class="t" style="left:343.3px;top:492px;height:16px;line-height:16px;font-size:12.2px;color:#4a6af0;letter-spacing:-0.413px;">DBCG1DC46E8D</div>
<div class="t" style="left:499px;top:491px;height:16px;line-height:16px;font-size:12.3px;color:#222;letter-spacing:0.265px;">venturak3</div>
<div class="t" style="left:655.2px;top:491px;height:16px;line-height:16px;font-size:12.3px;color:#222;letter-spacing:0.367px;">N/A</div>
<div class="t" style="left:811.2px;top:491px;height:16px;line-height:16px;font-size:12.3px;color:#222;letter-spacing:-0.09px;">Internet Gateway Device v1.0</div>
<div class="t" style="left:982.5px;top:491px;height:16px;line-height:16px;font-size:12.3px;color:#222;letter-spacing:0.017px;">SaiNXT Technologies LLP (DBC Technologies)-HGU-400-4</div>
<div class="abs" style="left:0;top:148.0px;width:1306px;height:1px;background:#e6e8ec"></div>
<div class="abs" style="left:0;top:184.8px;width:1306px;height:1px;background:#e6e8ec"></div>
<div class="abs" style="left:0;top:221.5px;width:1306px;height:1px;background:#e6e8ec"></div>
<div class="abs" style="left:0;top:258.5px;width:1306px;height:1px;background:#e6e8ec"></div>
<div class="abs" style="left:0;top:295.5px;width:1306px;height:1px;background:#e6e8ec"></div>
<div class="abs" style="left:0;top:332.35px;width:1306px;height:1px;background:#e6e8ec"></div>
<div class="abs" style="left:0;top:368.9px;width:1306px;height:1px;background:#e6e8ec"></div>
<div class="abs" style="left:0;top:405.85px;width:1306px;height:1px;background:#e6e8ec"></div>
<div class="abs" style="left:0;top:442.9px;width:1306px;height:1px;background:#e6e8ec"></div>
<div class="abs" style="left:0;top:479.8px;width:1306px;height:1px;background:#e6e8ec"></div>
<div class="abs" style="left:0;top:516.4px;width:1306px;height:1px;background:#e6e8ec"></div>
<div class="abs" style="left:711px;top:152.4px;width:31px;height:26.3px;border-radius:4px;background:#737373"></div>
<div class="t" style="left:716.6px;top:157.4px;height:16px;line-height:16px;font-size:10.6px;color:#fff;font-weight:700;letter-spacing:0.383px;">N/A</div>
<div class="abs" style="left:1306px;top:51px;width:11px;height:474px;background:#f1f1f1"></div>
<div class="abs" style="left:1307.5px;top:57.7px;width:6.5px;height:259.7px;border-radius:3.5px;background:#b1b1b1"></div>
<svg style="left:1307.3px;top:49px" width="7" height="5" viewBox="0 0 7 5"><path d="M0 4.6 L3.5 0 L7 4.6 Z" fill="#b9b9b9"/></svg>
<svg style="left:1307.3px;top:507.5px" width="7" height="5" viewBox="0 0 7 5"><path d="M0 .2 L3.5 4.8 L7 .2 Z" fill="#b9b9b9"/></svg>
<div class="abs" style="left:0;top:515.5px;width:1317px;height:10px;background:#f1f1f1"></div>
<div class="abs" style="left:12.2px;top:517px;width:967.8px;height:6px;border-radius:3px;background:#b1b1b1"></div>
<svg style="left:2.8px;top:516.7px" width="5" height="7" viewBox="0 0 5 7"><path d="M4.8 0 L0 3.5 L4.8 7 Z" fill="#b9b9b9"/></svg>
<svg style="left:1298px;top:516.7px" width="5" height="7" viewBox="0 0 5 7"><path d="M.2 0 L5 3.5 L.2 7 Z" fill="#b9b9b9"/></svg>
</div>
<div class="abs" style="left:1346px;top:84px;width:11px;height:674px;background:#fcfcfc"></div>
<div class="abs" style="left:1357px;top:84px;width:9px;height:674px;background:#f1f1f1"></div>
<div class="abs" style="left:1358.7px;top:60px;width:6px;height:683.5px;border-radius:3px;background:#b1b1b1"></div>
<svg style="left:1358.3px;top:750.5px" width="7" height="5" viewBox="0 0 7 5"><path d="M0 .2 L3.5 4.8 L7 .2 Z" fill="#b9b9b9"/></svg>
<div class="abs" style="left:0;top:757.8px;width:1366px;height:10.2px;background:#f1f1f1"></div>
<svg style="left:2.4px;top:759px" width="5" height="7" viewBox="0 0 5 7"><path d="M4.8 0 L0 3.5 L4.8 7 Z" fill="#b9b9b9"/></svg>
<svg style="left:1349px;top:759px" width="5" height="7" viewBox="0 0 5 7"><path d="M.2 0 L5 3.5 L.2 7 Z" fill="#b9b9b9"/></svg>
</body>
</html>
